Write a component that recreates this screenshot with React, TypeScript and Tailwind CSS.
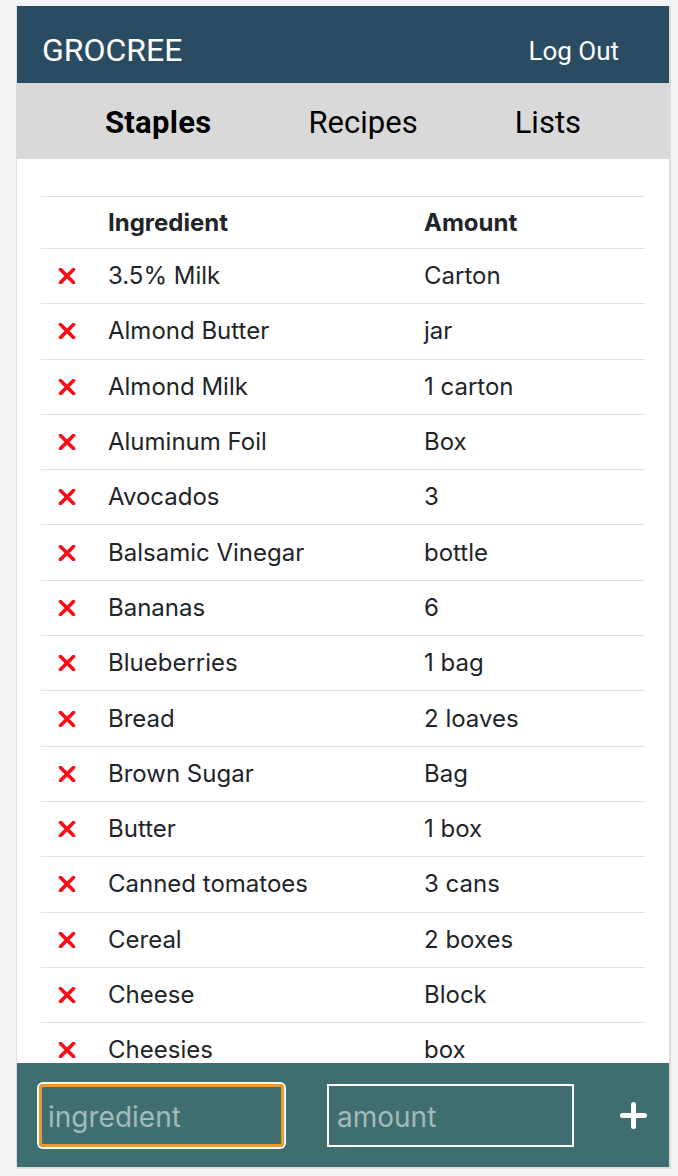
const staples = [
  { name: "3.5% Milk", amount: "Carton" },
  { name: "Almond Butter", amount: "jar" },
  { name: "Almond Milk", amount: "1 carton" },
  { name: "Aluminum Foil", amount: "Box" },
  { name: "Avocados", amount: "3" },
  { name: "Balsamic Vinegar", amount: "bottle" },
  { name: "Bananas", amount: "6" },
  { name: "Blueberries", amount: "1 bag" },
  { name: "Bread", amount: "2 loaves" },
  { name: "Brown Sugar", amount: "Bag" },
  { name: "Butter", amount: "1 box" },
  { name: "Canned tomatoes", amount: "3 cans" },
  { name: "Cereal", amount: "2 boxes" },
  { name: "Cheese", amount: "Block" },
  { name: "Cheesies", amount: "box" },
];

const RemoveIcon = () => (
  <svg width="18" height="16" viewBox="0 0 18 16" aria-hidden="true">
    <path d="M2.5 1.5 L15.5 14.5 M15.5 1.5 L2.5 14.5" stroke="#ff0a14" strokeWidth="3.6" strokeLinecap="round" />
  </svg>
);

const PlusIcon = () => (
  <svg width="27" height="27" viewBox="0 0 27 27" aria-hidden="true">
    <path d="M13.5 2.5 V24.5 M2.5 13.5 H24.5" stroke="white" strokeWidth="5" strokeLinecap="round" />
  </svg>
);

const App = () => {
  return (
    <div className="h-screen w-full overflow-hidden bg-[#f3f3f3] pt-[6px] pl-[16px]">
      <div className="flex h-[1163px] w-[655px] flex-col overflow-hidden border-r-2 border-b-2 border-l border-[#dcdcdc] bg-white">
        <header className="flex h-[77px] shrink-0 items-center justify-between bg-[#2a4c62] pt-[10px] pl-[25px] pr-[50px] font-['Roboto',sans-serif] text-white">
          <span className="text-[32px] leading-none">GROCREE</span>
          <span className="pt-[2px] text-[26px] leading-none">Log Out</span>
        </header>

        <nav className="flex h-[76px] shrink-0 items-center justify-center gap-[97px] bg-[#d9d9d9] pt-[2px] font-['Roboto',sans-serif] text-[31px] leading-none text-black">
          <span className="font-bold tracking-[0.3px]">Staples</span>
          <span>Recipes</span>
          <span>Lists</span>
        </nav>

        <main className="flex-1 overflow-hidden px-[24px] pt-[37px] font-['Inter',sans-serif] text-[24px] text-[#212529]">
          <div className="grid h-[52px] grid-cols-[56px_316px_1fr] items-center border-t border-[#dee2e6] font-bold">
            <span />
            <span className="pl-[11px]">Ingredient</span>
            <span className="pl-[11px]">Amount</span>
          </div>
          {staples.map((item) => (
            <div
              key={item.name}
              className="grid h-[55.3px] grid-cols-[56px_316px_1fr] items-center border-t border-[#dee2e6]"
            >
              <span className="flex justify-end pr-[21px]">
                <RemoveIcon />
              </span>
              <span className="pl-[11px]">{item.name}</span>
              <span className="pl-[11px]">{item.amount}</span>
            </div>
          ))}
        </main>

        <footer className="flex h-[104px] shrink-0 items-center bg-[#3f6e70] pl-[22px] font-['Inter',sans-serif]">
          <input
            placeholder="ingredient"
            className="h-[63px] w-[245px] rounded-[4px] border-[3px] border-[#e99a2b] bg-transparent pt-[4px] pl-[6px] text-[28px] leading-normal text-white shadow-[0_0_0_2px_white] outline-none placeholder:text-[#a3bbbb]"
          />
          <input
            placeholder="amount"
            className="ml-[43px] h-[63px] w-[247px] border-2 border-white bg-transparent pt-[4px] pl-[8px] text-[28px] leading-normal text-white outline-none placeholder:text-[#a3bbbb]"
          />
          <button className="ml-[46px] flex items-center justify-center">
            <PlusIcon />
          </button>
        </footer>
      </div>
    </div>
  );
};

export default App;
